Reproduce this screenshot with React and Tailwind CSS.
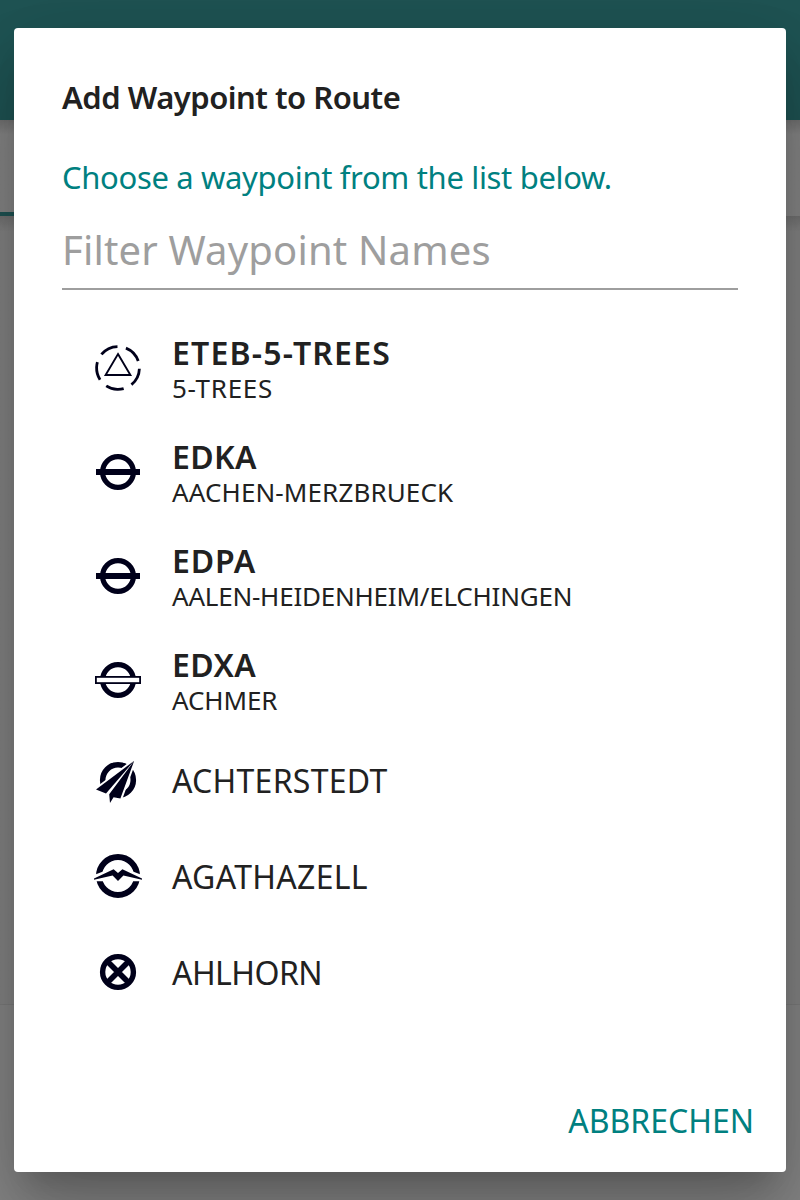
import React from "react";

const INK = "#00001a";

const icons = {
  report: (
    <>
      <circle cx="24" cy="24" r="21.4" fill="none" stroke={INK} strokeWidth="2.8" strokeDasharray="18.2 8.69" transform="rotate(2 24 24)" />
      <path d="M24 10 36.4 31H11.6Z" fill="none" stroke={INK} strokeWidth="1.9" />
    </>
  ),
  airfield: (
    <>
      <circle cx="24" cy="24" r="15.4" fill="none" stroke={INK} strokeWidth="5.2" />
      <path d="M2 24H46" stroke={INK} strokeWidth="6" />
    </>
  ),
  grass: (
    <>
      <circle cx="24" cy="24" r="15.4" fill="none" stroke={INK} strokeWidth="5.2" />
      <rect x="1.9" y="20.9" width="44.2" height="6.2" fill="#fff" stroke={INK} strokeWidth="1.8" />
    </>
  ),
  ultralight: (
    <>
      <circle cx="24" cy="24" r="15.3" fill="none" stroke={INK} strokeWidth="5.6" />
      <path d="M40 5 2 33.7 12 37.3 16 46.7 26.5 42.3Z" fill="#fff" stroke="#fff" strokeWidth="4" />
      <path d="M40.2 4.8 2 33.6 12 37.4Z" fill={INK} />
      <path d="M40.2 4.8 15.2 38.3 16 46.9 19.6 41.2 26.4 42.6Z" fill={INK} />
    </>
  ),
  glider: (
    <>
      <circle cx="24" cy="24" r="19" fill="none" stroke={INK} strokeWidth="6" />
      <path d="M-1 23.3 19.5 15.5 24 19 28.5 15.5 49 23.3V29.3H-1Z" fill="#fff" />
      <path d="M0 26.4 19.6 17.2 24 20.9 28.4 17.2 48 26.4V27.8L29.4 23.4 24 29 18.6 23.4 0 27.8Z" fill={INK} />
    </>
  ),
  closed: (
    <>
      <circle cx="24" cy="24" r="15.4" fill="none" stroke={INK} strokeWidth="5.4" />
      <path d="M13.5 13.5 34.5 34.5M34.5 13.5 13.5 34.5" stroke={INK} strokeWidth="5.6" />
    </>
  ),
};

const waypoints = [
  { icon: "report", code: "ETEB-5-TREES", name: "5-TREES", codeTracking: "tracking-[1.2px]", tracking: "tracking-[0.7px]" },
  { icon: "airfield", code: "EDKA", name: "AACHEN-MERZBRUECK", codeTracking: "tracking-[0.3px]", tracking: "tracking-[0.12px]" },
  { icon: "airfield", code: "EDPA", name: "AALEN-HEIDENHEIM/ELCHINGEN", codeTracking: "tracking-[0.8px]", tracking: "tracking-[-0.22px]" },
  { icon: "grass", code: "EDXA", name: "ACHMER", codeTracking: "tracking-[0.4px]", tracking: "tracking-[-0.1px]" },
  { icon: "ultralight", name: "ACHTERSTEDT", tracking: "tracking-[0.27px]" },
  { icon: "glider", name: "AGATHAZELL", tracking: "tracking-[0.3px]" },
  { icon: "closed", name: "AHLHORN", tracking: "tracking-[-0.55px]" },
];

function Waypoint({ icon, code, name, codeTracking, tracking }) {
  return (
    <li className={code ? "flex h-[104px] items-center pl-8" : "flex h-24 items-center pl-8"}>
      <svg viewBox="0 0 48 48" className="size-12 shrink-0">{icons[icon]}</svg>
      {code ? (
        <div className="ml-[30px] whitespace-nowrap pt-1">
          <div className={`text-[32px] leading-[38px] font-semibold ${codeTracking}`}>{code}</div>
          <div className={`pb-0.5 text-[26px] leading-8 ${tracking}`}>{name}</div>
        </div>
      ) : (
        <div className={`ml-[30px] whitespace-nowrap pt-0.5 text-[32px] leading-10 ${tracking}`}>{name}</div>
      )}
    </li>
  );
}

export default function App() {
  return (
    <div className="relative h-[1200px] w-[800px] overflow-hidden bg-[#868686] font-['Noto_Sans',sans-serif] text-[#212121]">
      <div className="flex h-full flex-col">
        <div className="h-[120px] bg-[#1f5454]" />
        <div className="h-24 bg-linear-to-b from-[#727272] to-[#868686] to-15%">
          <div className="mt-[92px] h-1 w-1/2 bg-[#1f5454]" />
        </div>
        <div className="h-[789px] border-b border-[#7c7c7c] bg-linear-to-b from-[#727272] to-[#848484] to-2%" />
      </div>
      <div className="absolute inset-0 px-3.5 py-7">
        <div className="flex h-full flex-col rounded bg-white pt-[47px] shadow-[0_22px_30px_-14px_rgba(0,0,0,0.2),0_48px_76px_6px_rgba(0,0,0,0.14),0_18px_92px_16px_rgba(0,0,0,0.12)]">
          <div className="px-12">
            <h1 className="whitespace-nowrap text-[31px] leading-[44px] font-semibold tracking-[-0.5px]">Add Waypoint to Route</h1>
            <p className="mt-9 whitespace-nowrap text-[31px] leading-[44px] tracking-[-0.34px] text-[#008080]">Choose a waypoint from the list below.</p>
            <div className="mt-[21px] h-[70px] whitespace-nowrap border-b-2 border-[#9e9e9e] pt-[3px] text-[40px] leading-[54px] tracking-[0.17px] text-[#9e9e9e]">Filter Waypoint Names</div>
          </div>
          <ul className="mt-[26px] px-12">
            {waypoints.map((w) => <Waypoint key={w.name} {...w} />)}
          </ul>
          <div className="mt-auto flex justify-end pr-8 pb-[29px]">
            <button className="whitespace-nowrap text-[32px] leading-[44px] text-[#008080]">ABBRECHEN</button>
          </div>
        </div>
      </div>
    </div>
  );
}
